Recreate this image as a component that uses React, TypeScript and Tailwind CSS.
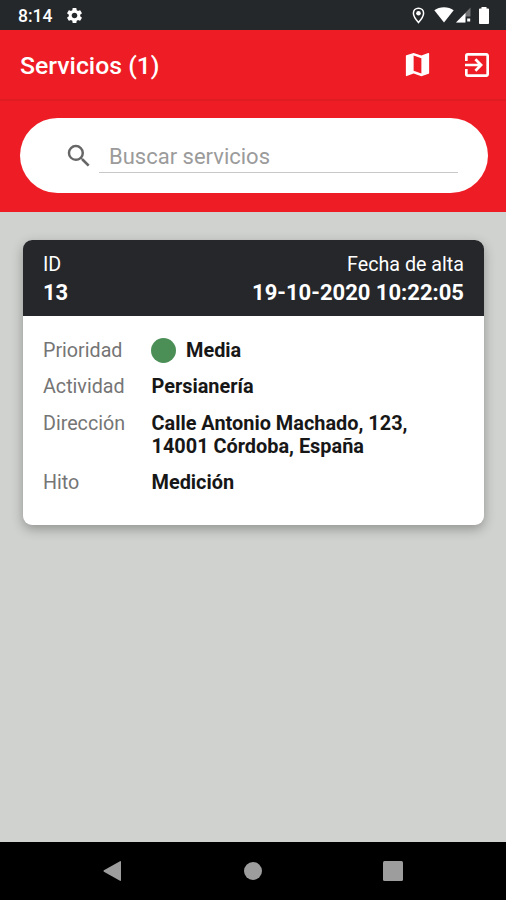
import { MdExitToApp, MdMap, MdSearch, MdSettings } from "react-icons/md";

function StatusBar() {
  return (
    <div className="flex h-[30px] shrink-0 items-center bg-[#25282b] pl-[18px] pr-[17px] text-white">
      <span className="pt-[2px] text-[17.5px] font-medium leading-[30px]">8:14</span>
      <MdSettings className="ml-[13px] size-[19px]" />
      <div className="ml-auto flex items-center">
        <svg className="h-[17px] w-[13px]" viewBox="0 0 13 17" fill="none" stroke="#fff">
          <path d="M6.5 1.2C3.6 1.2 1.4 3.4 1.4 6.2c0 3.5 5.1 9.4 5.1 9.4s5.1-5.9 5.1-9.4c0-2.8-2.2-5-5.1-5z" strokeWidth="1.5" />
          <circle cx="6.5" cy="6.3" r="2.3" fill="#fff" stroke="none" />
        </svg>
        <svg className="ml-[9px] h-[16px] w-[20px]" viewBox="0 0 20 16" fill="#fff">
          <path d="M10 15.5L.3 3.3C3 1.3 6.3.3 10 .3s7 1 9.7 3L10 15.500z" />
        </svg>
        <svg className="ml-[2px] h-[16px] w-[15px]" viewBox="0 0 15 16" fill="#fff">
          <path d="M14.5.5v9H9V15.5H0z" opacity=".35" />
          <path d="M9.5 6v9.5H0z" />
          <path d="M11.200 11.500h3v3h-3z" />
        </svg>
        <svg className="ml-[8px] h-[17px] w-[10px]" viewBox="0 0 10 17" fill="#fff">
          <path d="M2.500 0h5v1.500h1.700c.4 0 .8.4.8.8V16.200c0 .4-.4.8-.8.8H.8c-.4 0-.8-.4-.8-.8V2.300c0-.4.4-.8.8-.8h1.700z" />
        </svg>
      </div>
    </div>
  );
}

function Row({ label, children }: { label: string; children: React.ReactNode }) {
  return (
    <div className="flex leading-[23px]">
      <span className="w-[108.5px] shrink-0 text-[19.7px] text-[#757575]">{label}</span>
      <span className="flex items-center text-[19.9px] font-bold text-[#171717]">{children}</span>
    </div>
  );
}

export default function App() {
  return (
    <div className="flex h-[900px] w-[506px] flex-col overflow-hidden bg-[#d0d2cf] font-['Roboto',sans-serif]">
      <StatusBar />
      <header className="flex h-[71px] shrink-0 items-center border-b-2 border-[#df1c22] bg-[#ee1c25] pl-5 pr-[13px] text-white">
        <h1 className="pt-[2px] text-[24.8px] font-medium leading-8">Servicios (1)</h1>
        <MdMap className="ml-auto size-[31px]" />
        <MdExitToApp className="ml-[28px] size-[32px]" />
      </header>
      <div className="h-[111px] shrink-0 bg-[#ee1c25] pl-5 pr-[18px] pt-[17.4px]">
        <div className="flex h-[74.5px] items-center rounded-full bg-white pl-[44px] pr-[30px]">
          <MdSearch className="size-[30px] text-[#666]" />
          <div className="-mt-[3px] ml-[5px] h-[37px] flex-1 border-b border-[#c8c8c8] pl-[10px] text-[22px] leading-[41px] text-[#9b9b9b]">
            Buscar servicios
          </div>
        </div>
      </div>
      <main className="flex-1 pl-[23.4px] pr-[22px] pt-[28px]">
        <article className="h-[284.5px] overflow-hidden rounded-[9px] bg-white shadow-[0_4px_12px_rgba(0,0,0,0.3)]">
          <div className="flex h-[75.5px] justify-between bg-[#25272b] pl-[19.6px] pr-5 pt-[11px] text-white">
            <div>
              <div className="text-[19.7px] leading-[28px]">ID</div>
              <div className="text-[22px] font-bold leading-[28px]">13</div>
            </div>
            <div className="text-right">
              <div className="text-[19.7px] leading-[28px]">Fecha de alta</div>
              <div className="text-[22px] font-bold leading-[28px]">19-10-2020 10:22:05</div>
            </div>
          </div>
          <div className="flex flex-col gap-[13.4px] pl-[19.6px] pr-5 pt-[23.5px]">
            <Row label="Prioridad">
              <span className="-mb-px -mt-[2px] mr-[9.5px] size-[25px] rounded-full bg-[#4b8f57]" />
              Media
            </Row>
            <Row label="Actividad">Persianería</Row>
            <Row label="Dirección">
              <span>
                Calle Antonio Machado, 123,
                <br />
                14001 Córdoba, España
              </span>
            </Row>
            <Row label="Hito">Medición</Row>
          </div>
        </article>
      </main>
      <nav className="flex h-[58px] shrink-0 items-center bg-black">
        <svg className="ml-[103px] h-[22px] w-[19px]" viewBox="0 0 19 22" fill="#9d9d9d">
          <path d="M17 1.2L.9 10.2q-.9.8 0 1.6L17 20.800q1 .4 1-.8V2q0-1.200-1-.8z" />
        </svg>
        <span className="ml-[122px] size-[18px] rounded-full bg-[#9d9d9d]" />
        <span className="ml-[121px] size-[20px] rounded-[1.5px] bg-[#9d9d9d]" />
      </nav>
    </div>
  );
}
